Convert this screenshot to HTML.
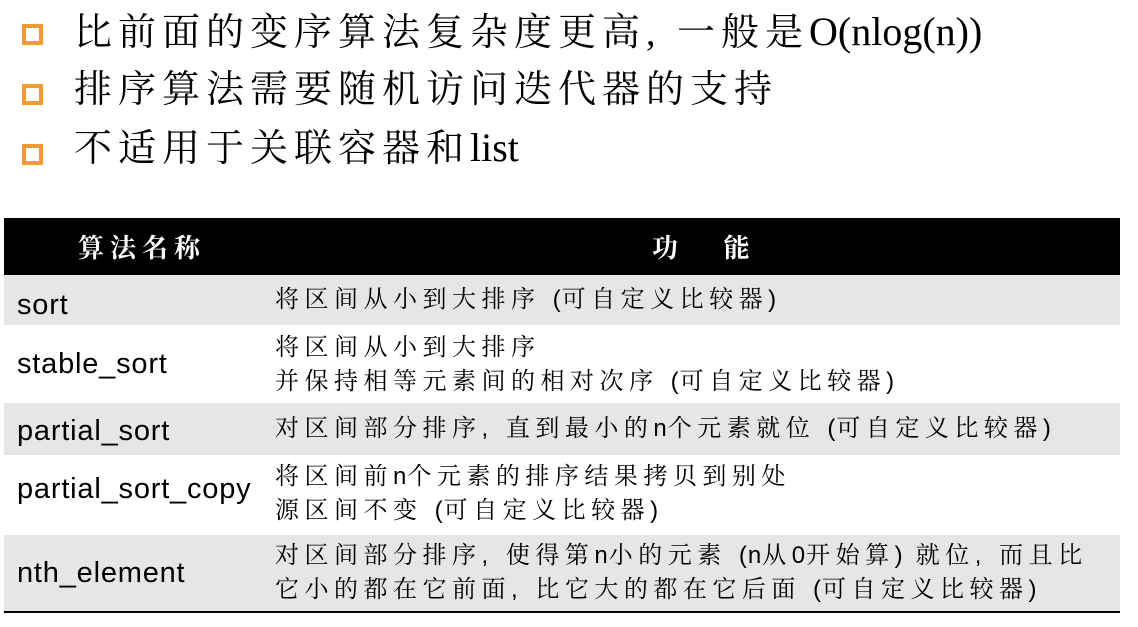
<!DOCTYPE html>
<html><head><meta charset="utf-8"><style>
body{margin:0;width:1138px;height:627px;background:#fff;position:relative;overflow:hidden}
.b{position:absolute;left:22px;width:13px;height:13px;border:4px solid #f39a33}
.t{position:absolute;left:74px;font-family:"Liberation Serif","Noto Serif CJK SC",serif;font-size:38px;line-height:44px;color:#000;white-space:nowrap;letter-spacing:6px}
.t span{letter-spacing:0;font-size:40px}
.r{position:absolute;left:4px;width:1116px}
.n{position:absolute;left:17px;font-family:"Liberation Sans",sans-serif;font-size:29px;color:#000;letter-spacing:0.8px}
.d{position:absolute;left:275px;font-family:"Liberation Sans","Noto Serif CJK SC",serif;font-size:24px;line-height:34px;color:#000;white-space:nowrap;letter-spacing:5.5px}
.d span{letter-spacing:1px}
</style></head><body>
<div class="b" style="top:24px"></div><div class="t" style="top:10px">比前面的变序算法复杂度更高, 一般是<span>O(nlog(n))</span></div>
<div class="b" style="top:84px"></div><div class="t" style="top:68px">排序算法需要随机访问迭代器的支持</div>
<div class="b" style="top:144px"></div><div class="t" style="top:126px">不适用于关联容器和<span>list</span></div>

<div class="r" style="top:218px;height:57px;background:#000"></div>
<div style="position:absolute;top:228px;left:78px;font-family:'Noto Serif CJK SC',serif;font-weight:bold;font-size:26px;color:#fff;letter-spacing:6px">算法名称</div>
<div style="position:absolute;top:228px;left:652px;font-family:'Noto Serif CJK SC',serif;font-weight:bold;font-size:26px;color:#fff">功&nbsp;&nbsp;&nbsp;&nbsp;&nbsp;&nbsp;&nbsp;能</div>

<div class="r" style="top:275px;height:50px;background:#e6e6e6"></div>
<div class="r" style="top:403px;height:52px;background:#e6e6e6"></div>
<div class="r" style="top:535px;height:76px;background:#e6e6e6"></div>
<div class="r" style="top:611px;height:2px;background:#000"></div>

<div class="n" style="top:289px">sort</div>
<div class="d" style="top:283px">将区间从小到大排序 <span>(</span>可自定义比较器<span>)</span></div>
<div class="n" style="top:348px">stable_sort</div>
<div class="d" style="top:331px">将区间从小到大排序<br>并保持相等元素间的相对次序 <span>(</span>可自定义比较器<span>)</span></div>
<div class="n" style="top:415px">partial_sort</div>
<div class="d" style="top:412px">对区间部分排序, 直到最小的<span>n</span>个元素就位 <span>(</span>可自定义比较器<span>)</span></div>
<div class="n" style="top:473px">partial_sort_copy</div>
<div class="d" style="top:460px">将区间前<span>n</span>个元素的排序结果拷贝到别处<br>源区间不变 <span>(</span>可自定义比较器<span>)</span></div>
<div class="n" style="top:557px">nth_element</div>
<div class="d" style="top:539px">对区间部分排序, 使得第<span>n</span>小的元素 <span>(n</span>从<span>0</span>开始算<span>)</span> 就位, 而且比<br>它小的都在它前面, 比它大的都在它后面 <span>(</span>可自定义比较器<span>)</span></div>
</body></html>
